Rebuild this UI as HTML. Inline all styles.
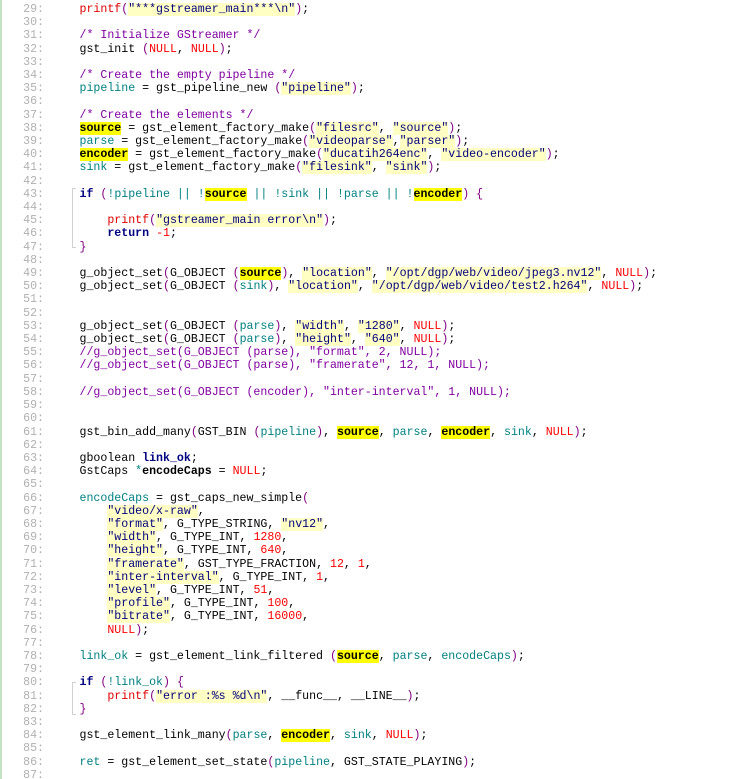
<!DOCTYPE html>
<html><head><meta charset="utf-8"><style>
html,body{margin:0;padding:0;background:#fff;width:738px;height:779px;overflow:hidden}
body{position:relative;font-family:"Liberation Mono",monospace;font-size:11.6px}
.bar{position:absolute;left:0;top:0;width:2px;height:779px;background:#c4e2c4}
.ln{position:absolute;left:0;top:3px;width:44px;text-align:right;color:#b0b0b0;line-height:13.2px;white-space:pre}
.code{position:absolute;left:79.5px;top:3px;line-height:13.2px;white-space:pre;color:#000}
.v{color:#008080}.s{color:#000080;background:#ffffc4}.p{color:#800080}.n{color:#ff0000}
.c{color:#8000a0}.k{color:#000080;font-weight:bold}.h{background:#ffff00;font-weight:bold}.f{color:#e00000}
.g{position:absolute;border-left:1px solid #d0d0d0;border-top:1px solid #d0d0d0;border-bottom:1px solid #d0d0d0;width:3px}
</style></head><body>
<div class="bar"></div>
<div class="ln">29:
30:
31:
32:
33:
34:
35:
36:
37:
38:
39:
40:
41:
42:
43:
44:
45:
46:
47:
48:
49:
50:
51:
52:
53:
54:
55:
56:
57:
58:
59:
60:
61:
62:
63:
64:
65:
66:
67:
68:
69:
70:
71:
72:
73:
74:
75:
76:
77:
78:
79:
80:
81:
82:
83:
84:
85:
86:
87:</div>
<div class="g" style="left:72px;top:188px;height:58px"></div>
<div class="g" style="left:72px;top:682px;height:31px"></div>
<div class="code"><span class="f">printf</span><span class="p">(</span><span class="s">"***gstreamer_main***\n"</span><span class="p">)</span>;

<span class="c">/* Initialize GStreamer */</span>
gst_init <span class="p">(</span><span class="n">NULL</span>, <span class="n">NULL</span><span class="p">)</span>;

<span class="c">/* Create the empty pipeline */</span>
<span class="v">pipeline</span> = gst_pipeline_new <span class="p">(</span><span class="s">"pipeline"</span><span class="p">)</span>;

<span class="c">/* Create the elements */</span>
<span class="h">source</span> = gst_element_factory_make<span class="p">(</span><span class="s">"filesrc"</span>, <span class="s">"source"</span><span class="p">)</span>;
<span class="v">parse</span> = gst_element_factory_make<span class="p">(</span><span class="s">"videoparse"</span>,<span class="s">"parser"</span><span class="p">)</span>;
<span class="h">encoder</span> = gst_element_factory_make<span class="p">(</span><span class="s">"ducatih264enc"</span>, <span class="s">"video-encoder"</span><span class="p">)</span>;
<span class="v">sink</span> = gst_element_factory_make<span class="p">(</span><span class="s">"filesink"</span>, <span class="s">"sink"</span><span class="p">)</span>;

<span class="k">if</span> <span class="p">(</span><span class="v">!pipeline || !</span><span class="h">source</span><span class="v"> || !sink || !parse || !</span><span class="h">encoder</span><span class="p">)</span> <span class="p">{</span>

    <span class="f">printf</span><span class="p">(</span><span class="s">"gstreamer_main error\n"</span><span class="p">)</span>;
    <span class="k">return</span> <span class="n">-1</span>;
<span class="p">}</span>

g_object_set<span class="p">(</span>G_OBJECT <span class="p">(</span><span class="h">source</span><span class="p">)</span>, <span class="s">"location"</span>, <span class="s">"/opt/dgp/web/video/jpeg3.nv12"</span>, <span class="n">NULL</span><span class="p">)</span>;
g_object_set<span class="p">(</span>G_OBJECT <span class="p">(</span><span class="v">sink</span><span class="p">)</span>, <span class="s">"location"</span>, <span class="s">"/opt/dgp/web/video/test2.h264"</span>, <span class="n">NULL</span><span class="p">)</span>;


g_object_set<span class="p">(</span>G_OBJECT <span class="p">(</span><span class="v">parse</span><span class="p">)</span>, <span class="s">"width"</span>, <span class="s">"1280"</span>, <span class="n">NULL</span><span class="p">)</span>;
g_object_set<span class="p">(</span>G_OBJECT <span class="p">(</span><span class="v">parse</span><span class="p">)</span>, <span class="s">"height"</span>, <span class="s">"640"</span>, <span class="n">NULL</span><span class="p">)</span>;
<span class="c">//g_object_set(G_OBJECT (parse), "format", 2, NULL);</span>
<span class="c">//g_object_set(G_OBJECT (parse), "framerate", 12, 1, NULL);</span>

<span class="c">//g_object_set(G_OBJECT (encoder), "inter-interval", 1, NULL);</span>


gst_bin_add_many<span class="p">(</span>GST_BIN <span class="p">(</span><span class="v">pipeline</span><span class="p">)</span>, <span class="h">source</span>, <span class="v">parse</span>, <span class="h">encoder</span>, <span class="v">sink</span>, <span class="n">NULL</span><span class="p">)</span>;

gboolean <span class="k">link_ok</span>;
GstCaps <span class="v">*</span><b>encodeCaps</b> = <span class="n">NULL</span>;

<span class="v">encodeCaps</span> = gst_caps_new_simple<span class="p">(</span>
    <span class="s">"video/x-raw"</span>,
    <span class="s">"format"</span>, G_TYPE_STRING, <span class="s">"nv12"</span>,
    <span class="s">"width"</span>, G_TYPE_INT, <span class="n">1280</span>,
    <span class="s">"height"</span>, G_TYPE_INT, <span class="n">640</span>,
    <span class="s">"framerate"</span>, GST_TYPE_FRACTION, <span class="n">12</span>, <span class="n">1</span>,
    <span class="s">"inter-interval"</span>, G_TYPE_INT, <span class="n">1</span>,
    <span class="s">"level"</span>, G_TYPE_INT, <span class="n">51</span>,
    <span class="s">"profile"</span>, G_TYPE_INT, <span class="n">100</span>,
    <span class="s">"bitrate"</span>, G_TYPE_INT, <span class="n">16000</span>,
    <span class="n">NULL</span><span class="p">)</span>;

<span class="v">link_ok</span> = gst_element_link_filtered <span class="p">(</span><span class="h">source</span>, <span class="v">parse</span>, <span class="v">encodeCaps</span><span class="p">)</span>;

<span class="k">if</span> <span class="p">(</span><span class="v">!link_ok</span><span class="p">)</span> <span class="p">{</span>
    <span class="f">printf</span><span class="p">(</span><span class="s">"error :%s %d\n"</span>, __func__, __LINE__<span class="p">)</span>;
<span class="p">}</span>

gst_element_link_many<span class="p">(</span><span class="v">parse</span>, <span class="h">encoder</span>, <span class="v">sink</span>, <span class="n">NULL</span><span class="p">)</span>;

<span class="v">ret</span> = gst_element_set_state<span class="p">(</span><span class="v">pipeline</span>, GST_STATE_PLAYING<span class="p">)</span>;
</div>
</body></html>
